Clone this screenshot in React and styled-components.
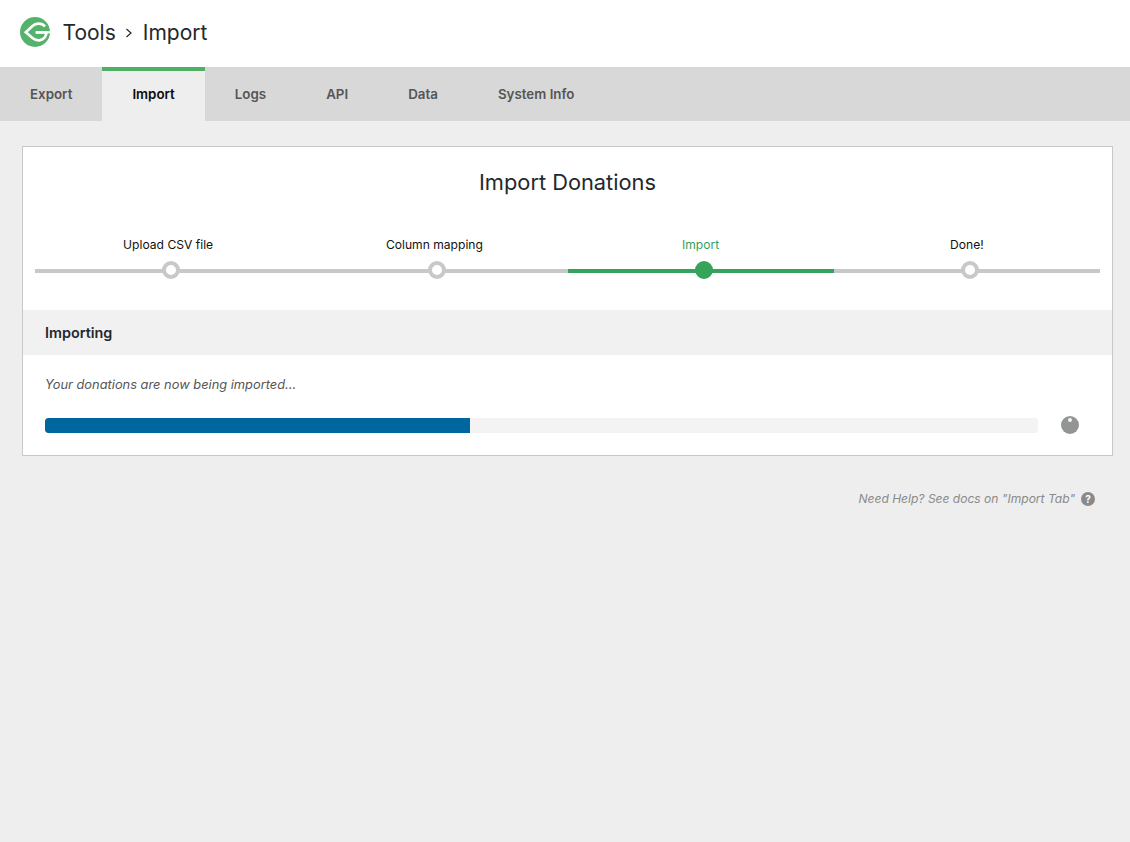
import React from 'react';
import styled, { createGlobalStyle } from 'styled-components';

const GlobalStyle = createGlobalStyle`
  html, body { margin: 0; padding: 0; background: #eeeeee; }
  body { font-family: Inter, "Liberation Sans", sans-serif; color: #23282d; }
`;

const Page = styled.div`
  min-height: 842px;
  background: #eeeeee;
`;

const Header = styled.header`
  display: flex;
  align-items: center;
  gap: 12.500px;
  height: 67px;
  padding: 0 0 3px 20px;
  box-sizing: border-box;
  background: #fff;
`;

const Title = styled.h1`
  display: flex;
  align-items: center;
  gap: 9.500px;
  margin: 0;
  padding-top: 1px;
  font-size: 21px;
  font-weight: 400;
  line-height: 28px;
  color: #23282d;
`;

const Tabs = styled.nav`
  display: flex;
  height: 54px;
  background: #d8d8d8;
`;

const Tab = styled.a`
  display: flex;
  align-items: center;
  padding: 0 30px 4px;
  border-top: 4px solid ${p => (p.$active ? '#4fb065' : 'transparent')};
  background: ${p => (p.$active ? '#eeeeee' : 'transparent')};
  color: ${p => (p.$active ? '#0b0b0b' : '#555555')};
  font-size: 13.35px;
  font-weight: 600;
  line-height: 18px;
`;

const Main = styled.main`
  padding: 25px 17px 0 22px;
`;

const Card = styled.section`
  height: 310px;
  box-sizing: border-box;
  border: 1px solid #c8c8c8;
  background: #fff;
`;

const CardTitle = styled.h2`
  margin: 0;
  padding-top: 22px;
  text-align: center;
  font-size: 21.8px;
  font-weight: 400;
  line-height: 27px;
  color: #23282d;
`;

const Steps = styled.ol`
  display: grid;
  grid-template-columns: repeat(4, 1fr);
  margin: 0;
  padding: 41px 12px 0;
  list-style: none;
`;

const Step = styled.li`
  display: flex;
  flex-direction: column;
  align-items: center;
  color: ${p => (p.$active ? '#38a05c' : '#111111')};
  font-size: 12.1px;
  line-height: 16px;
`;

const Track = styled.div`
  position: relative;
  align-self: stretch;
  height: 4px;
  margin-top: 16px;
  background: ${p => (p.$active ? '#36a35a' : '#c8c8c8')};
`;

const Dot = styled.span`
  position: absolute;
  top: -8px;
  left: calc(50% - 6px);
  width: 18px;
  height: 18px;
  box-sizing: border-box;
  border: 4px solid ${p => (p.$active ? '#36a35a' : '#c8c8c8')};
  border-radius: 50%;
  background: ${p => (p.$active ? '#36a35a' : '#fff')};
`;

const SectionBar = styled.div`
  display: flex;
  align-items: center;
  height: 45px;
  margin-top: 37px;
  padding-left: 22px;
  background: #f1f1f1;
  font-size: 14.4px;
  font-weight: 600;
  color: #23282d;
`;

const Status = styled.p`
  margin: 0;
  padding: 21px 0 0 22px;
  font-size: 12.85px;
  font-style: italic;
  line-height: 17px;
  color: #555555;
`;

const ProgressRow = styled.div`
  display: flex;
  align-items: center;
  gap: 23px;
  padding: 23px 0 0 22px;
`;

const ProgressTrack = styled.div`
  flex: none;
  width: 993px;
  height: 15px;
  border-radius: 3px;
  background: #f3f3f3;
  overflow: hidden;
`;

const ProgressFill = styled.div`
  height: 100%;
  border-radius: 3px 0 0 3px;
  background: #0066a0;
`;

const Spinner = styled.span`
  position: relative;
  flex: none;
  width: 18px;
  height: 18px;
  border-radius: 50%;
  background: #939595;

  &::after {
    content: '';
    position: absolute;
    top: 2px;
    left: 7px;
    width: 4px;
    height: 4px;
    border-radius: 50%;
    background: #f4f4f4;
  }
`;

const Help = styled.p`
  display: flex;
  justify-content: flex-end;
  align-items: center;
  gap: 6px;
  margin: 0;
  padding: 35px 18px 0 0;
  font-size: 12.05px;
  font-style: italic;
  line-height: 16px;
  color: #8a8a8a;
`;

const HelpIcon = styled.span`
  display: flex;
  align-items: center;
  justify-content: center;
  width: 14px;
  height: 14px;
  border-radius: 50%;
  background: #8a8a8a;
  color: #fff;
  font-size: 10px;
  font-style: normal;
  font-weight: 700;
`;

const Logo = () => (
  <svg width="30" height="30" viewBox="0 0 30 30" aria-hidden="true">
    <circle cx="15" cy="15" r="15" fill="#55b26b" />
    <path
      d="M25 9.500C21.500 5.500 15.500 6 12.500 9L5.800 15.300l6.700 5.700c4 3.300 9.500 3.300 12.500-1 .7-1.200 1.300-2.800 1.600-4.500H15.500"
      fill="none"
      stroke="#fff"
      strokeWidth="2.600"
    />
    <path d="M30 14.200h-14v2.200h14z" fill="#fff" />
  </svg>
);

const STEPS = ['Upload CSV file', 'Column mapping', 'Import', 'Done!'];
const TABS = ['Export', 'Import', 'Logs', 'API', 'Data', 'System Info'];

export default function App() {
  return (
    <Page>
      <GlobalStyle />
      <Header>
        <Logo />
        <Title>
          <span>Tools</span>
          <svg width="8" height="10" viewBox="0 0 8 10" aria-hidden="true">
            <path d="M1.500 1l4.500 4-4.500 4" fill="none" stroke="#23282d" strokeWidth="1.200" />
          </svg>
          <span>Import</span>
        </Title>
      </Header>
      <Tabs>
        {TABS.map(t => (
          <Tab key={t} $active={t === 'Import'}>{t}</Tab>
        ))}
      </Tabs>
      <Main>
        <Card>
          <CardTitle>Import Donations</CardTitle>
          <Steps>
            {STEPS.map(s => (
              <Step key={s} $active={s === 'Import'}>
                {s}
                <Track $active={s === 'Import'}>
                  <Dot $active={s === 'Import'} />
                </Track>
              </Step>
            ))}
          </Steps>
          <SectionBar>Importing</SectionBar>
          <Status>Your donations are now being imported...</Status>
          <ProgressRow>
            <ProgressTrack>
              <ProgressFill style={{ width: '42.8%' }} />
            </ProgressTrack>
            <Spinner />
          </ProgressRow>
        </Card>
        <Help>
          Need Help? See docs on "Import Tab"
          <HelpIcon>?</HelpIcon>
        </Help>
      </Main>
    </Page>
  );
}
